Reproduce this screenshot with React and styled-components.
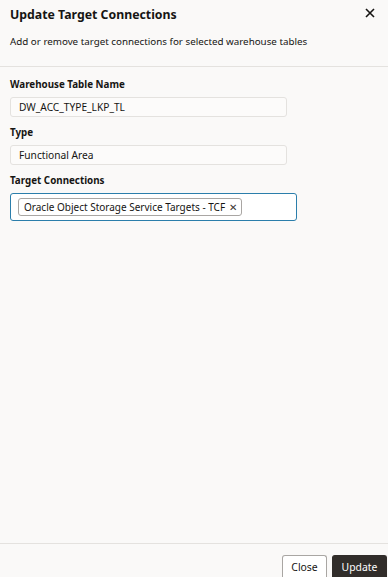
import React from 'react'
import styled, { createGlobalStyle } from 'styled-components'

const GlobalStyle = createGlobalStyle`
  html, body {
    margin: 0;
    padding: 0;
    height: 100%;
  }
  body {
    background: #faf9f8;
    font-family: 'Noto Sans', 'Open Sans', sans-serif;
    color: #161513;
  }
`

const Dialog = styled.div`
  display: flex;
  flex-direction: column;
  height: 100vh;
  box-sizing: border-box;
`

const Header = styled.div`
  position: relative;
  padding: 5px 10px 0 10px;
  height: 67px;
  box-sizing: border-box;
  border-bottom: 1px solid #e4e2df;
`

const Title = styled.h1`
  margin: 0;
  font-size: 12.3px;
  font-weight: 700;
  line-height: 20px;
`

const Subtitle = styled.p`
  margin: 9px 0 0 0;
  font-size: 9.8px;
  line-height: 16px;
`

const CloseIcon = styled.button`
  position: absolute;
  top: 4px;
  right: 9px;
  width: 18px;
  height: 18px;
  padding: 0;
  border: none;
  background: none;
  display: flex;
  align-items: center;
  justify-content: center;
  cursor: pointer;
`

const Body = styled.div`
  flex: 1;
  padding: 10px 10px 0 10px;
  display: flex;
  flex-direction: column;
`

const Field = styled.div`
  display: flex;
  flex-direction: column;
  margin-bottom: 8px;
`

const Label = styled.label`
  font-size: 9.8px;
  font-weight: 700;
  line-height: 16px;
  margin-bottom: 4px;
`

const ReadOnly = styled.div`
  width: ${p => p.width}px;
  height: 20px;
  box-sizing: border-box;
  border: 1px solid #e4e2df;
  border-radius: 3px;
  background: #fcfbfa;
  padding: 0 8px;
  font-size: 10.2px;
  line-height: 18px;
  display: flex;
  align-items: center;
`

const ChipBox = styled.div`
  width: 287px;
  height: 28px;
  box-sizing: border-box;
  border: 1.5px solid #2b7eab;
  border-radius: 3px;
  background: #fff;
  padding: 0 7px;
  display: flex;
  align-items: center;
`

const Chip = styled.span`
  display: inline-flex;
  align-items: center;
  gap: 4px;
  height: 18px;
  box-sizing: border-box;
  border: 1px solid #a9a6a3;
  border-radius: 3px;
  background: #fff;
  padding: 0 4px 0 5px;
  font-size: 10px;
  white-space: nowrap;
`

const ChipRemove = styled.span`
  font-size: 10px;
  line-height: 1;
  color: #3a3632;
`

const Footer = styled.div`
  height: 33px;
  border-top: 1px solid #e4e2df;
  display: flex;
  justify-content: flex-end;
  align-items: flex-end;
  gap: 5px;
  padding: 0 1px 0 10px;
`

const Button = styled.button`
  height: 22px;
  box-sizing: border-box;
  border-radius: 3px 3px 0 0;
  border: 1px solid ${p => (p.primary ? '#312d2a' : '#a9a6a3')};
  border-bottom: none;
  background: ${p => (p.primary ? '#312d2a' : '#fff')};
  color: ${p => (p.primary ? '#fff' : '#161513')};
  font-family: 'Noto Sans', 'Open Sans', sans-serif;
  font-size: 10.4px;
  width: ${p => (p.primary ? 55 : 45)}px;
  padding: 0;
  cursor: pointer;
`

export default function App() {
  return (
    <>
      <GlobalStyle />
      <Dialog>
        <Header>
          <Title>Update Target Connections</Title>
          <Subtitle>Add or remove target connections for selected warehouse tables</Subtitle>
          <CloseIcon aria-label='Close'>
            <svg width='10' height='10' viewBox='0 0 10 10'>
              <path d='M1 1L9 9M9 1L1 9' stroke='#161513' strokeWidth='1.6' />
            </svg>
          </CloseIcon>
        </Header>
        <Body>
          <Field>
            <Label>Warehouse Table Name</Label>
            <ReadOnly width={277}>DW_ACC_TYPE_LKP_TL</ReadOnly>
          </Field>
          <Field>
            <Label>Type</Label>
            <ReadOnly width={277}>Functional Area</ReadOnly>
          </Field>
          <Field>
            <Label>Target Connections</Label>
            <ChipBox>
              <Chip>
                Oracle Object Storage Service Targets - TCF
                <ChipRemove>✕</ChipRemove>
              </Chip>
            </ChipBox>
          </Field>
        </Body>
        <Footer>
          <Button>Close</Button>
          <Button primary>Update</Button>
        </Footer>
      </Dialog>
    </>
  )
}
